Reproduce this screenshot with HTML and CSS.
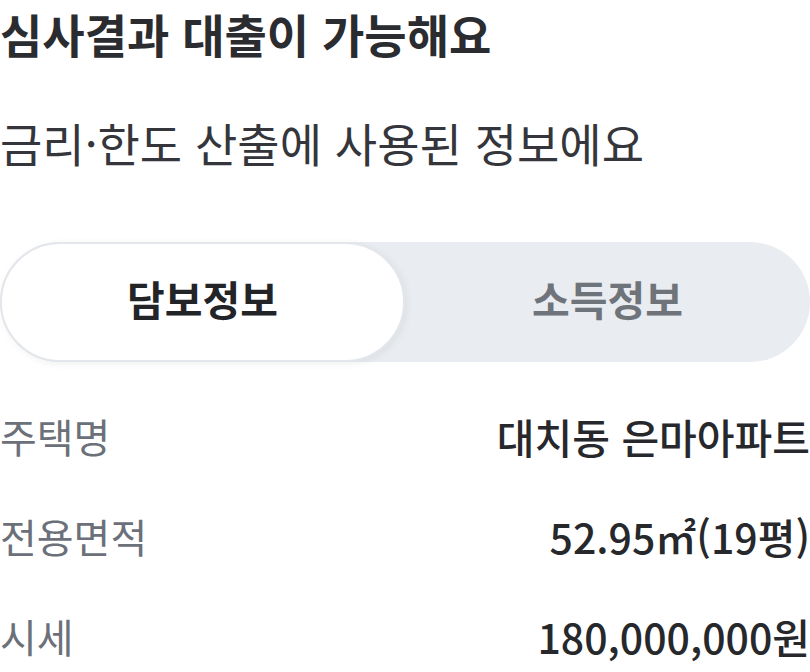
FILE: index.html
```html
<!DOCTYPE html>
<html lang="ko">
<head>
<meta charset="utf-8">
<link rel="stylesheet" href="styles.css">
</head>
<body>
<div class="page">
  <h1 class="title">심사결과 대출이 가능해요</h1>
  <p class="subtitle">금리·한도 산출에 사용된 정보에요</p>
  <div class="tabs">
    <div class="tab active">담보정보</div>
    <div class="tab">소득정보</div>
  </div>
  <div class="rows">
    <div class="row"><span class="label">주택명</span><span class="value">대치동 은마아파트</span></div>
    <div class="row"><span class="label">전용면적</span><span class="value">52.95㎡(19평)</span></div>
    <div class="row"><span class="label">시세</span><span class="value">180,000,000원</span></div>
  </div>
</div>
</body>
</html>
```
FILE: styles.css
```css
* { box-sizing: border-box; }
html, body { margin: 0; padding: 0; background: #fff; overflow: hidden; }
body { font-family: "Noto Sans CJK KR", "Noto Sans", sans-serif; }
.page { width: 810px; padding-top: 2px; }
.title {
  margin: 0;
  font-size: 46px;
  font-weight: 700;
  line-height: 62px;
  color: #2a2c30;
}
.subtitle {
  margin: 44px 0 0;
  font-size: 46px;
  font-weight: 400;
  line-height: 68px;
  color: #34363b;
}
.tabs {
  margin-top: 66px;
  height: 120px;
  background: #e9ecf0;
  border-radius: 60px;
  display: grid;
  grid-template-columns: 1fr 1fr;
}
.tab {
  display: flex;
  align-items: center;
  justify-content: center;
  padding-bottom: 8px;
  font-size: 41px;
  font-weight: 700;
  color: #6f737a;
  border-radius: 60px;
}
.tab.active {
  background: #fff;
  color: #222428;
  border: 2px solid #e3e6ea;
  box-shadow: 2px 2px 8px rgba(0,0,0,0.06);
}
.rows { margin-top: 24px; }
.row {
  height: 100px;
  display: flex;
  align-items: center;
  justify-content: space-between;
}
.label { font-size: 40px; color: #6b7079; font-weight: 400; }
.value { font-size: 41px; color: #26282c; font-weight: 500; }
```
